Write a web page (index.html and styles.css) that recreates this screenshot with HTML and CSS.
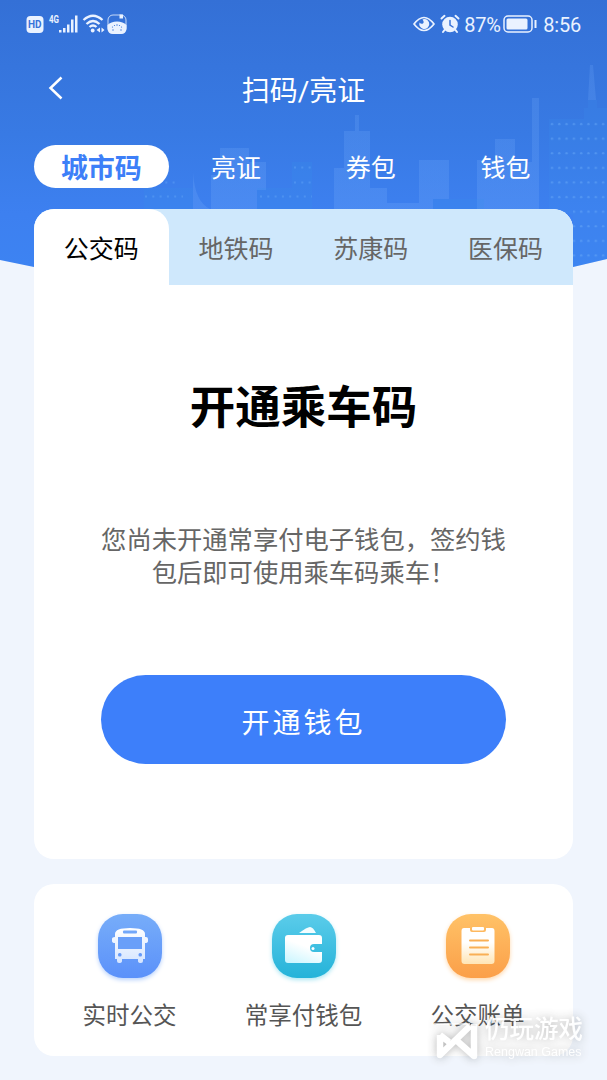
FILE: index.html
```html
<!DOCTYPE html>
<html lang="zh-CN">

<head>
    <meta charset="UTF-8">
    <meta name="viewport" content="width=device-width, initial-scale=1.0">
    <title>扫码/亮证</title>
    <link rel="stylesheet" href="styles.css">
</head>

<body>
    <div class="page">
        <!-- header background with skyline -->
        <svg class="skyline" width="607" height="280" viewBox="0 0 607 280">
            <defs>
                <linearGradient id="sky" x1="0" y1="0" x2="0" y2="1">
                    <stop offset="0" stop-color="#3470d6" />
                    <stop offset="0.5" stop-color="#387ae4" />
                    <stop offset="0.8" stop-color="#3d80f0" />
                    <stop offset="1" stop-color="#3d83f2" />
                </linearGradient>
                <linearGradient id="tower" gradientUnits="userSpaceOnUse" x1="0" y1="60" x2="0" y2="210">
                    <stop offset="0" stop-color="#74acfa" stop-opacity="0.2" />
                    <stop offset="1" stop-color="#74acfa" stop-opacity="0.25" />
                </linearGradient>
                <pattern id="dots" x="549" y="119" width="7.3" height="14.6" patternUnits="userSpaceOnUse">
                    <circle cx="3" cy="5" r="1.2" fill="#6aabf8" />
                </pattern>
            </defs>
            <path d="M0 0H607V259L573 267H34L0 260Z" fill="url(#sky)" />
            <g fill="url(#tower)">
                <path d="M193 173Q195 202 210 209H193Z" />
                <path d="M211 209V175H220V148H249V162H266V190H257V209Z" />
                <path d="M334 209V168H344V131H355V115H359V131H370V188H387V203H419V160H449V199H433V209Z" />
                <path d="M477 209V160H495V139H515V162H532V98H539V209Z" />
                <path d="M588 100L590 65H593L596 100Z" />
            </g>
            <path d="M549 119H584V108H588V100H597V108H607V259L573 267V215L549 209Z" fill="#3d91ef" opacity="0.18" />
            <path d="M549 119H607V257L573 264V209H549Z" fill="url(#dots)" opacity="0.5" />
            <path d="M144 188H193V209H144ZM257 188H292V162H312V209H257ZM433 199H484V209H433Z" fill="#3592ed" opacity="0.2" />
            <path d="M145 196.500H183M158 182.500H178M260 196.500H312M294 167.500H312M294 182.500H312" stroke="#68aaf8" stroke-width="2" stroke-dasharray="2 5.300" opacity="0.4" />
        </svg>

        <header class="status-bar">
            <svg width="115" height="32" viewBox="0 0 115 32" fill="#eaf2ff">
                <rect x="6.500" y="8" width="17" height="17" rx="4" />
                <text class="hd" x="8" y="20">HD</text>
                <text class="net" x="29" y="15" textLength="10" lengthAdjust="spacingAndGlyphs">4G</text>
                <path d="M39 22h2.500v2.500H39zM43 20h2.500v4.500H43zM47 16.500h2.500v8H47zM51 11.500h2.500v13H51zM55 7.500h2.500v17H55z" />
                <g fill="none" stroke="#eaf2ff" stroke-width="2.300">
                    <path d="M63.500 12Q73 3.500 82.500 12M66.500 16Q73 10 79.500 16M69.500 19Q73 16 76.500 19" />
                </g>
                <circle cx="72.700" cy="22.500" r="1.900" />
                <path d="M80 19.500v5L76.500 22zM81.500 19.500v5L84.500 22z" />
                <rect x="88" y="7" width="18" height="18" rx="5" fill="none" stroke="#eaf2ff" stroke-width="0.800" />
                <path d="M87.500 17Q91 13.500 97 13.500T106.500 17V21Q106 26 101 26H93Q88 26 87.500 21ZM99.500 6.500h3.500v4h-3.500z" />
                <g fill="#3873d9">
                    <circle cx="92.500" cy="19" r=".6" /><circle cx="94.500" cy="17.500" r=".6" /><circle cx="97" cy="17" r=".7" /><circle cx="99.500" cy="17.500" r=".6" /><circle cx="101.500" cy="19" r=".6" /><circle cx="93" cy="22" r=".7" /><circle cx="101" cy="22" r=".7" />
                </g>
            </svg>
            <div class="status-right">
                <svg class="eye" width="22" height="16" viewBox="0 0 22 16">
                    <path d="M1 8Q11-5 21 8Q11 21 1 8Z" fill="none" stroke="#eaf2ff" stroke-width="1.700" />
                    <path d="M11 3A5 5 0 1 1 6.500 6.500Q8 8.500 10 7.500Q11.500 6 9.500 3.500Z" fill="#eaf2ff" />
                </svg>
                <svg class="alarm" width="20" height="20" viewBox="0 0 20 20" fill="none" stroke="#eaf2ff" stroke-width="2" stroke-linecap="round">
                    <circle cx="10" cy="10.500" r="7.800" fill="#eaf2ff" stroke="none" />
                    <path d="M1.500 4.500L4.500 1.800M18.500 4.500L15.500 1.800M4.500 16L3 18M15.500 16L17 18" />
                    <path d="M10 6.500V11L13 13" stroke="#3873d9" stroke-width="1.500" />
                </svg>
                <span class="percent">87%</span>
                <svg class="battery" width="34" height="18" viewBox="0 0 34 18">
                    <rect x="1" y="1" width="28" height="16" rx="4" fill="none" stroke="#eaf2ff" stroke-width="1.500" />
                    <rect x="3.500" y="3.500" width="21" height="11" rx="1.500" fill="#eaf2ff" />
                    <path d="M31.500 5h2v8h-2z" fill="#eaf2ff" />
                </svg>
                <span class="time">8:56</span>
            </div>
        </header>

        <div class="title-bar">
            <svg class="back" width="16" height="24" viewBox="0 0 16 24">
                <path d="M13.500 1.500L2.500 12L13.500 22.500" fill="none" stroke="#fff" stroke-width="2.500" />
            </svg>
            <h1>扫码/亮证</h1>
        </div>

        <nav class="main-tabs">
            <a class="active">城市码</a>
            <a>亮证</a>
            <a>券包</a>
            <a>钱包</a>
        </nav>

        <main class="card code-card">
            <div class="code-tabs">
                <a class="active">公交码</a>
                <a>地铁码</a>
                <a>苏康码</a>
                <a>医保码</a>
            </div>
            <h2>开通乘车码</h2>
            <p>您尚未开通常享付电子钱包，签约钱<br>包后即可使用乘车码乘车！</p>
            <button class="open-button">开通钱包</button>
        </main>

        <section class="card services">
            <a class="service">
                <svg width="76" height="76" viewBox="0 0 76 76">
                    <defs>
                        <linearGradient id="blue" x1="0" y1="0" x2="0" y2="1">
                            <stop offset="0" stop-color="#77adf9" />
                            <stop offset="1" stop-color="#5b91fa" />
                        </linearGradient>
                        <linearGradient id="busFill" x1="0" y1="0" x2="0" y2="1">
                            <stop offset="0" stop-color="#fff" />
                            <stop offset="1" stop-color="#d5e5ff" />
                        </linearGradient>
                    </defs>
                    <rect class="icon-blue" x="6" y="6" width="64" height="64" rx="25" fill="url(#blue)" />
                    <path d="M23 26Q23 20 38 20T53 26V29H54Q56 29 56 31V33Q56 35 53 35V51H51V53Q51 55 49 55Q46 55 46 53V51H30V53Q30 55 27 55Q25 55 25 53V51H23V35Q20 35 20 33V31Q20 29 23 29Z" fill="url(#busFill)" />
                    <rect x="31" y="22.500" width="14" height="3" rx="1" fill="#72a7f9" />
                    <path d="M26 29H50V41H26Z" fill="#699ff9" />
                    <rect x="26" y="45" width="3.500" height="3.500" rx="1.500" fill="#659af8" />
                    <rect x="46.500" y="45" width="3.500" height="3.500" rx="1.500" fill="#659af8" />
                </svg>
                <span>实时公交</span>
            </a>
            <a class="service">
                <svg width="76" height="76" viewBox="0 0 76 76">
                    <defs>
                        <linearGradient id="cyan" x1="0" y1="0" x2="0" y2="1">
                            <stop offset="0" stop-color="#5bccea" />
                            <stop offset="1" stop-color="#25b3d9" />
                        </linearGradient>
                        <linearGradient id="walletFill" x1="0" y1="1" x2="0.500" y2="0">
                            <stop offset="0" stop-color="#c7f5ff" />
                            <stop offset="0.700" stop-color="#fff" />
                        </linearGradient>
                    </defs>
                    <rect class="icon-cyan" x="6" y="6" width="64" height="64" rx="25" fill="url(#cyan)" />
                    <path d="M33 25Q41 19 44 19Q47 19 50 25Z" fill="#f3fdff" />
                    <path d="M22 27H53Q56 27 56 30V36H48Q44 36 44 40T48 44H56V52Q56 55 53 55H22Q19 55 19 52V30Q19 27 22 27Z" fill="url(#walletFill)" />
                    <circle cx="47" cy="40.500" r="1.500" fill="#fff" />
                </svg>
                <span>常享付钱包</span>
            </a>
            <a class="service">
                <svg width="76" height="76" viewBox="0 0 76 76">
                    <defs>
                        <linearGradient id="orange" x1="0" y1="0" x2="0" y2="1">
                            <stop offset="0" stop-color="#ffc267" />
                            <stop offset="1" stop-color="#fb9f49" />
                        </linearGradient>
                        <linearGradient id="billFill" x1="0" y1="0" x2="0" y2="1">
                            <stop offset="0.400" stop-color="#fff" />
                            <stop offset="1" stop-color="#ffe5b5" />
                        </linearGradient>
                    </defs>
                    <rect class="icon-orange" x="6" y="6" width="64" height="64" rx="25" fill="url(#orange)" />
                    <path d="M24 20H30V22Q30 24 32 24H44Q46 24 46 22V20H52Q54.500 20 54.500 23V53Q54.500 56 51.500 56H24.500Q21.500 56 21.500 53V23Q21.500 20 24 20Z" fill="url(#billFill)" />
                    <rect x="32" y="19" width="12" height="3.500" rx="1" fill="#fff" />
                    <path d="M30 32.500H48M30 39.500H48M30 46.500H48" stroke="#f9af55" stroke-width="2" stroke-linecap="round" />
                </svg>
                <span>公交账单</span>
            </a>
        </section>

        <div class="watermark">
            <svg width="44" height="42" viewBox="0 0 44 42">
                <path d="M0 4H36" stroke="#fff" stroke-width="2" opacity="0.7" />
                <path d="M6 15V35L36 6M6 15L15 22M40 4V36L22 20" fill="none" stroke="#fff" stroke-width="6.500" stroke-linejoin="round" />
            </svg>
            <div class="watermark-text">
                <strong>仍玩游戏</strong>
                <span>Rengwan Games</span>
            </div>
        </div>
    </div>
</body>

</html>
```
FILE: styles.css
```css
* {
    box-sizing: border-box;
}

body {
    margin: 0;
    background-color: #f0f5fd;
    font-family: Roboto, "Noto Sans CJK SC", sans-serif;
}

.page {
    position: relative;
    width: 607px;
    height: 1080px;
    overflow: hidden;
    padding: 0 34px;
}

.skyline {
    position: absolute;
    top: 0;
    left: 0;
    z-index: -1;
}

.status-bar {
    display: flex;
    justify-content: space-between;
    height: 48px;
    margin: 0 -14px;
    padding-top: 8px;
    color: #eaf2ff;
}

.hd {
    font: bold 10px Roboto, sans-serif;
    fill: #3873d9;
}

.net {
    font: bold 11px Roboto, sans-serif;
}

.status-right {
    display: flex;
    align-items: center;
    height: 32px;
    padding-right: 6px;
    font-size: 20px;
}

.alarm {
    margin-left: 5px;
}

.percent {
    width: 38px;
    margin-left: 4px;
    letter-spacing: -0.2px;
}

.percent,
.time {
    margin-top: 2px;
}

.battery {
    margin-left: 1px;
}

.time {
    margin-left: 6px;
    letter-spacing: -0.2px;
}

.title-bar {
    display: grid;
    grid-template-columns: 60px 1fr 60px;
    align-items: center;
    height: 80px;
}

.back {
    margin-left: 14px;
}

h1 {
    margin: 1px 0 0;
    color: #fff;
    font-size: 28px;
    font-weight: 400;
    text-align: center;
}

.main-tabs,
.code-tabs {
    display: grid;
    grid-template-columns: repeat(4, 1fr);
    text-align: center;
}

.main-tabs {
    height: 43px;
    margin-top: 17px;
    color: #fff;
    font-size: 25px;
    line-height: 48px;
}

.main-tabs .active {
    height: 43px;
    border-radius: 22px;
    background-color: #fff;
    color: #3d7ff8;
    font-size: 27px;
    font-weight: 700;
}

.card {
    overflow: hidden;
    border-radius: 20px;
    background-color: #fff;
}

.code-card {
    height: 650px;
    margin-top: 21px;
    text-align: center;
}

.code-tabs {
    height: 76px;
    background-color: #cfe8fc;
    color: #666;
    font-size: 25px;
    line-height: 81px;
}

.code-tabs a {
    height: 76px;
}

.code-tabs .active {
    border-radius: 20px 20px 0 0;
    background-color: #fff;
    color: #000;
}

h2 {
    margin: 91px 0 0;
    font-size: 45.500px;
    font-weight: 700;
    line-height: 66px;
}

p {
    margin: 82px 0 0;
    color: #666;
    font-size: 25.300px;
    line-height: 33px;
}

.open-button {
    width: 405px;
    height: 89px;
    margin-top: 85px;
    padding-top: 3px;
    border: 0;
    border-radius: 45px;
    background-color: #3d7ffa;
    color: #fff;
    font-family: inherit;
    font-size: 28px;
    letter-spacing: 3px;
}

.services {
    display: grid;
    grid-template-columns: repeat(3, 174px);
    justify-content: center;
    height: 172px;
    margin-top: 25px;
    padding: 24px 0 0;
}

.service {
    display: flex;
    flex-direction: column;
    align-items: center;
    color: #555;
    font-size: 23.500px;
    line-height: 34px;
}

.service span {
    margin-top: 15px;
}

.icon-blue {
    filter: drop-shadow(0 2px 2px #b9d2fc);
}

.icon-cyan {
    filter: drop-shadow(0 2px 2px #ade7f3);
}

.icon-orange {
    filter: drop-shadow(0 2px 2px #ffd8ac);
}

.watermark {
    position: absolute;
    left: 434px;
    top: 1016px;
    display: flex;
    gap: 7px;
    color: #fff;
    filter: drop-shadow(0 0 5px rgba(90, 90, 90, 0.5));
    opacity: 0.9;
}

.watermark svg {
    margin-top: 4px;
}

.watermark-text {
    display: flex;
    flex-direction: column;
}

.watermark strong {
    font-size: 24.500px;
    font-weight: 500;
    line-height: 28px;
}

.watermark-text span {
    font: 12.500px/16px "Liberation Sans", sans-serif;
}
```
